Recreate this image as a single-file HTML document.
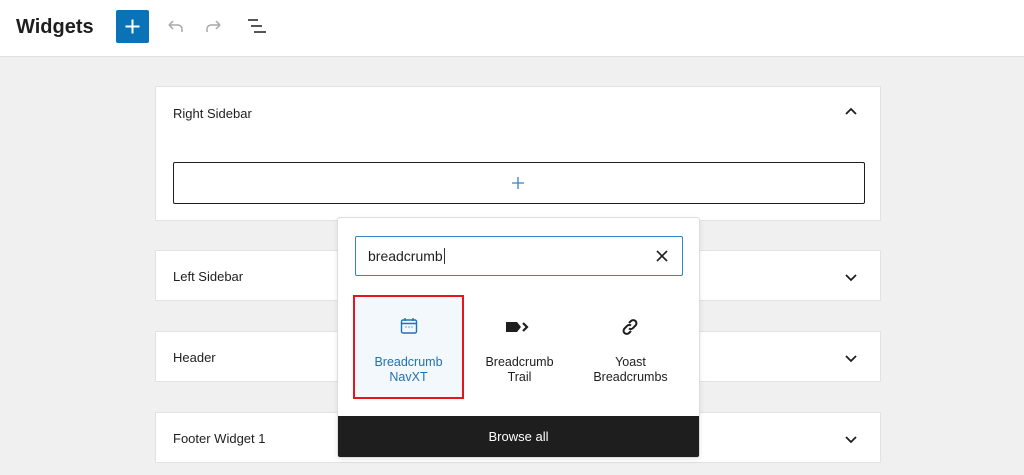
<!DOCTYPE html>
<html><head><meta charset="utf-8"><style>
*{box-sizing:border-box;margin:0;padding:0}
body{width:1024px;height:475px;overflow:hidden;background:#f0f0f0;font-family:"Liberation Sans",sans-serif;color:#1e1e1e;position:relative}
.top{position:absolute;left:0;top:0;width:1024px;height:57px;background:#fff;border-bottom:1px solid #e0e0e0}
.title{position:absolute;left:16px;top:16px;font-size:20px;font-weight:bold}
.add{position:absolute;left:116px;top:10px;width:33px;height:33px;background:#0a73b8;border-radius:2px}
.panel{position:absolute;left:155px;width:726px;background:#fff;border:1px solid #e2e2e2}
.panel .t{position:absolute;left:17px;font-size:13px}
.chev{position:absolute;right:22px}
.pop{position:absolute;left:337px;top:217px;width:363px;height:241px;background:#fff;border:1px solid #ddd;border-radius:3px;overflow:hidden;box-shadow:0 2px 6px rgba(0,0,0,.08)}
.search{position:absolute;left:17px;top:18px;width:328px;height:40px;border:1.5px solid #3582c4;border-radius:2px;font-size:14px;padding:11px 12px}
.item{position:absolute;top:77px;width:111px;height:104px;text-align:center;font-size:12.5px;line-height:15px}
.browse{position:absolute;left:0;bottom:0;width:100%;height:41px;background:#1e1e1e;color:#fff;font-size:13px;text-align:center;line-height:41px}
</style></head><body>
<div class="top">
<div class="title">Widgets</div>
<div class="add"><svg width="33" height="33"><path d="M16.5 9.5v14M9.5 16.5h14" stroke="#fff" stroke-width="2"/></svg></div>
<svg style="position:absolute;left:164px;top:16px" width="22" height="22"><path d="M5 9h9a4 4 0 0 1 4 4v3M5 9l4-4M5 9l4 4" fill="none" stroke="#a8a8a8" stroke-width="1.5"/></svg>
<svg style="position:absolute;left:203px;top:16px" width="22" height="22"><path d="M17 9H8a4 4 0 0 0-4 4v3M17 9l-4-4M17 9l-4 4" fill="none" stroke="#a8a8a8" stroke-width="1.5"/></svg>
<svg style="position:absolute;left:246px;top:16px" width="22" height="22"><path d="M2 4h10M5 10h11M8 16h12" stroke="#1e1e1e" stroke-width="1.6"/></svg>
</div>
<div class="panel" style="top:86px;height:135px">
<div class="t" style="top:19px">Right Sidebar</div>
<svg class="chev" style="top:18px" width="14" height="14"><path d="M2 9l5-5 5 5" fill="none" stroke="#1e1e1e" stroke-width="1.8"/></svg>
<div style="position:absolute;left:17px;top:75px;width:692px;height:42px;border:1px solid #1e1e1e;border-radius:2px"><svg style="position:absolute;left:338px;top:14px" width="12" height="12"><path d="M6 0v12M0 6h12" stroke="#3582c4" stroke-width="1.3"/></svg></div>
</div>
<div class="panel" style="top:250px;height:51px"><div class="t" style="top:18px">Left Sidebar</div><svg class="chev" style="top:19px" width="14" height="14"><path d="M2 5l5 5 5-5" fill="none" stroke="#1e1e1e" stroke-width="1.8"/></svg></div>
<div class="panel" style="top:331px;height:51px"><div class="t" style="top:18px">Header</div><svg class="chev" style="top:19px" width="14" height="14"><path d="M2 5l5 5 5-5" fill="none" stroke="#1e1e1e" stroke-width="1.8"/></svg></div>
<div class="panel" style="top:412px;height:51px"><div class="t" style="top:18px">Footer Widget 1</div><svg class="chev" style="top:19px" width="14" height="14"><path d="M2 5l5 5 5-5" fill="none" stroke="#1e1e1e" stroke-width="1.8"/></svg></div>
<div class="pop">
<div class="search">breadcrumb<span style="border-left:1px solid #333;margin-left:1px"></span>
<svg style="position:absolute;right:14px;top:13px" width="12" height="12"><path d="M1 1l10 10M11 1L1 11" stroke="#1e1e1e" stroke-width="1.6"/></svg></div>
<div class="item" style="left:15px;background:#f3f8fc;border:2px solid #e8141c;color:#2271b1">
<svg style="position:absolute;left:45px;top:20px" width="18" height="18"><rect x="1.5" y="3" width="15" height="13" rx="1.5" fill="none" stroke="#2271b1" stroke-width="1.4"/><path d="M1.5 6.5h15M5 1v3M13 1v3" stroke="#2271b1" stroke-width="1.4"/><path d="M5.5 10h1M8.5 10h1M11.5 10h1" stroke="#2271b1" stroke-width="1.2"/></svg>
<div style="position:absolute;top:58px;width:100%">Breadcrumb<br>NavXT</div></div>
<div class="item" style="left:126px">
<svg style="position:absolute;left:42px;top:26px" width="26" height="12"><path d="M0 1h11l4 5-4 5H0z" fill="#1e1e1e"/><path d="M17 2l4 4-4 4" fill="none" stroke="#1e1e1e" stroke-width="2.2"/></svg>
<div style="position:absolute;top:60px;width:100%">Breadcrumb<br>Trail</div></div>
<div class="item" style="left:237px">
<svg style="position:absolute;left:45px;top:22px" width="20" height="20"><path d="M9 6l2-2a3 3 0 0 1 4.5 4.5l-2.5 2.5a3 3 0 0 1-4 .5M11 14l-2 2a3 3 0 0 1-4.5-4.5L7 9a3 3 0 0 1 4-.5" fill="none" stroke="#1e1e1e" stroke-width="2"/></svg>
<div style="position:absolute;top:60px;width:100%">Yoast<br>Breadcrumbs</div></div>
<div class="browse">Browse all</div>
</div>
</body></html>
